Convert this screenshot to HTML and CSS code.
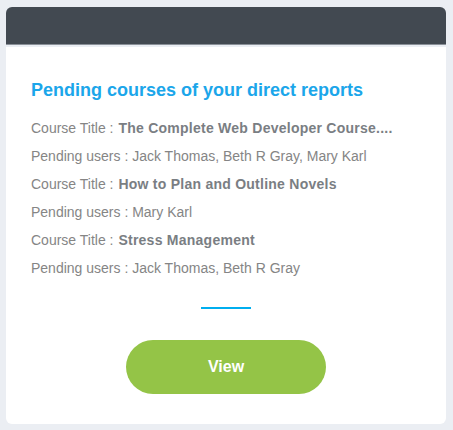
FILE: index.html
```html
<!DOCTYPE html>
<html>
<head>
<meta charset="utf-8">
<link rel="stylesheet" href="styles.css">
</head>
<body>
<div class="page">
  <div class="card">
    <div class="card-head"></div>
    <div class="card-body">
      <h2 class="title">Pending courses of your direct reports</h2>
      <ul class="list">
        <li>Course Title : <b>The Complete Web Developer Course....</b></li>
        <li>Pending users : Jack Thomas, Beth R Gray, Mary Karl</li>
        <li>Course Title : <b>How to Plan and Outline Novels</b></li>
        <li>Pending users : Mary Karl</li>
        <li>Course Title : <b>Stress Management</b></li>
        <li>Pending users : Jack Thomas, Beth R Gray</li>
      </ul>
      <div class="divider"></div>
      <div class="actions"><button class="btn">View</button></div>
    </div>
  </div>
</div>
</body>
</html>
```

FILE: styles.css
```css
html, body {
  margin: 0;
  padding: 0;
  background: #ebeef3;
  font-family: "Liberation Sans", Arial, sans-serif;
}
.page {
  padding: 7px 7px 6px 6px;
}
.card {
  width: 440px;
}
.card-head {
  height: 37px;
  background: #424951;
  border-radius: 6px 6px 0 0;
  border-bottom: 1px solid #8a9098;
  margin-bottom: 2px;
}
.card-body {
  background: #ffffff;
  border-radius: 0 0 6px 6px;
  padding: 31px 25px 30px 25px;
}
.title {
  margin: 0;
  font-size: 18px;
  line-height: 24px;
  font-weight: bold;
  color: #1ba6ea;
}
.list {
  list-style: none;
  margin: 12px 0 0 0;
  padding: 0;
}
.list li {
  font-size: 14px;
  line-height: 28px;
  color: #858585;
  white-space: nowrap;
}
.list b {
  color: #7a7e83;
  letter-spacing: 0.25px;
  margin-left: 1px;
}
.divider {
  width: 50px;
  height: 2px;
  background: #00aeef;
  margin: 25px auto 0 auto;
}
.actions {
  display: flex;
  justify-content: center;
  margin-top: 31px;
}
.btn {
  width: 200px;
  height: 54px;
  border: none;
  border-radius: 27px;
  background: #94c447;
  color: #ffffff;
  font-family: "Liberation Sans", Arial, sans-serif;
  font-size: 16px;
  font-weight: bold;
  padding: 0;
}
```
